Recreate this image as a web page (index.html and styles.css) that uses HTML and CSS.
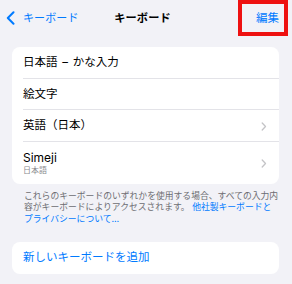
FILE: index.html
```html
<!DOCTYPE html>
<html lang="ja">
<head>
<meta charset="utf-8">
<link rel="stylesheet" href="styles.css">
</head>
<body>
<div class="screen">
  <header class="nav">
    <a class="back">
      <svg class="back-icon" width="9" height="14" viewBox="0 0 9 14"><path d="M7.5 1.2 L1.8 7 L7.5 12.8" fill="none" stroke="#007aff" stroke-width="2" stroke-linecap="round" stroke-linejoin="round"/></svg>
      <span>キーボード</span>
    </a>
    <h1 class="title">キーボード</h1>
    <a class="edit">編集</a>
  </header>

  <section class="card">
    <div class="row"><span class="label spaced">日本語 – かな入力</span></div>
    <div class="row"><span class="label">絵文字</span></div>
    <div class="row"><span class="label">英語（日本）</span><svg class="chev" width="6" height="9" viewBox="0 0 6 9"><path d="M1.2 1 L4.5 4.5 L1.2 8" fill="none" stroke="#c4c4c7" stroke-width="1.3" stroke-linecap="round" stroke-linejoin="round"/></svg></div>
    <div class="row tall">
      <div class="stack"><span class="label latin">Simeji</span><span class="sub">日本語</span></div>
      <svg class="chev" width="6" height="9" viewBox="0 0 6 9"><path d="M1.2 1 L4.5 4.5 L1.2 8" fill="none" stroke="#c4c4c7" stroke-width="1.3" stroke-linecap="round" stroke-linejoin="round"/></svg>
    </div>
  </section>

  <p class="footer">これらのキーボードのいずれかを使用する場合、すべての入力内容がキーボードによりアクセスされます。 <a class="link">他社製キーボードとプライバシーについて…</a></p>

  <section class="card card2">
    <div class="row"><span class="label blue">新しいキーボードを追加</span></div>
  </section>

  <div class="highlight"></div>
</div>
</body>
</html>
```

FILE: styles.css
```css
* { box-sizing: border-box; margin: 0; padding: 0; }
html, body { width: 292px; height: 284px; overflow: hidden; }
body {
  background: #f2f2f7;
  font-family: Inter, "Noto Sans CJK JP", sans-serif;
  color: #000;
}
.screen { position: relative; width: 292px; height: 284px; }

.nav {
  height: 35px;
  display: grid;
  grid-template-columns: 1fr auto 1fr;
  align-items: center;
  padding: 0 13px 1px 6px;
}
.back {
  display: flex;
  align-items: center;
  gap: 8px;
  color: #007aff;
  font-size: 11px;
  letter-spacing: 0.1px;
}
.back-icon { margin-top: 2px; }
.title {
  font-size: 11.2px;
  font-weight: 700;
  letter-spacing: 0.1px;
}
.edit {
  justify-self: end;
  color: #007aff;
  font-size: 11.5px;
}

.card {
  margin: 12px 13px 0 12px;
  background: #fff;
  border-radius: 8px;
  overflow: hidden;
}
.row {
  height: 31.7px;
  margin-left: 11px;
  padding-right: 12px;
  display: flex;
  align-items: center;
  justify-content: space-between;
  border-bottom: 0.8px solid #e3e3e8;
}
.row:last-child { border-bottom: none; }
.row.tall { height: 41.6px; }
.label { font-size: 11.5px; line-height: 15px; }
.spaced { word-spacing: 1.5px; }
.latin { font-size: 12px; }
.blue { color: #007aff; }
.stack { display: flex; flex-direction: column; padding-top: 1px; }
.sub { font-size: 8px; line-height: 11px; color: #8a8a8e; }
.chev { margin-top: 1px; }

.footer {
  padding: 6px 12px 0 24px;
  font-size: 8.8px;
  line-height: 11.8px;
  color: #6d6d72;
}
.link { color: #007aff; }

.card2 { margin-top: 17px; }

.highlight {
  position: absolute;
  left: 238px;
  top: 0;
  width: 50px;
  height: 36px;
  border: 4px solid #ee1111;
}
```
